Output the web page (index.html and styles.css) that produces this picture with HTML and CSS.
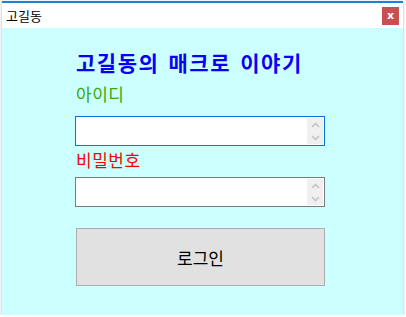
FILE: index.html
```html
<!DOCTYPE html>
<html>
<head>
  <title>고길동</title>
  <link rel="stylesheet" href="styles.css">
</head>
<body>
  <div class="window">
    <div class="titlebar">
      <span class="title">고길동</span>
      <span class="close">x</span>
    </div>
    <div class="content">
      <h1>고길동의 매크로 이야기</h1>
      <label class="label-id" for="userId">아이디</label>
      <div class="field focused">
        <input type="text" id="userId">
        <span class="spin">
          <svg width="9" height="6" viewBox="0 0 9 6"><path d="M1 5 L4.5 1.5 L8 5" fill="none" stroke="#c4c4c4" stroke-width="1.6"/></svg>
          <svg width="9" height="6" viewBox="0 0 9 6"><path d="M1 1 L4.5 4.5 L8 1" fill="none" stroke="#c4c4c4" stroke-width="1.6"/></svg>
        </span>
      </div>
      <label class="label-pw" for="userPw">비밀번호</label>
      <div class="field">
        <input type="password" id="userPw">
        <span class="spin">
          <svg width="9" height="6" viewBox="0 0 9 6"><path d="M1 5 L4.5 1.5 L8 5" fill="none" stroke="#c4c4c4" stroke-width="1.6"/></svg>
          <svg width="9" height="6" viewBox="0 0 9 6"><path d="M1 1 L4.5 4.5 L8 1" fill="none" stroke="#c4c4c4" stroke-width="1.6"/></svg>
        </span>
      </div>
      <button type="button" class="login">로그인</button>
    </div>
  </div>
</body>
</html>
```

FILE: styles.css
```css
body {
  margin: 0;
  background-color: #fff;
  font-family: "Noto Sans CJK KR", "Noto Sans", sans-serif;
}

.window {
  margin: 1px 0 0 2px;
  width: 401px;
  height: 312px;
  border-top: 2px solid #1883d7;
  box-shadow: 0 1px 3px rgba(0, 0, 0, 0.3);
  display: flex;
  flex-direction: column;
}

.titlebar {
  height: 25px;
  display: flex;
  align-items: center;
  justify-content: space-between;
  padding: 0 4px 0 4px;
  background-color: #fff;
}

.title {
  font-size: 13px;
  color: #000;
}

.close {
  width: 17px;
  height: 18px;
  background-color: #c75050;
  color: #fff;
  font-size: 11px;
  font-weight: bold;
  font-family: "DejaVu Sans", sans-serif;
  display: flex;
  align-items: center;
  justify-content: center;
  line-height: 1;
}

.content {
  flex: 1;
  background-color: #ccffff;
  padding: 0 0 0 73px;
  display: flex;
  flex-direction: column;
  align-items: flex-start;
}

.content h1 {
  margin: 20px 0 0 1px;
  font-size: 21px;
  line-height: 28px;
  font-weight: bold;
  letter-spacing: 1.5px;
  word-spacing: 3px;
  color: #0a00f5;
}

.content label {
  font-size: 17px;
  line-height: 24px;
  letter-spacing: 0.5px;
  margin-left: 1px;
}

.label-id {
  margin-top: 6px;
  color: #33aa00;
}

.label-pw {
  margin-top: 2px;
  color: #ff0000;
}

.field {
  width: 250px;
  height: 30px;
  box-sizing: border-box;
  border: 1px solid #7a7a7a;
  background-color: #fff;
  display: flex;
  align-items: stretch;
  padding: 1px;
}

.field.focused {
  border-color: #0078d7;
  margin-top: 10px;
}

.label-pw + .field {
  margin-top: 5px;
}

.field input {
  flex: 1;
  border: none;
  outline: none;
  min-width: 0;
  padding: 0 4px;
  background: transparent;
}

.spin {
  width: 16px;
  background-color: #f0f0f0;
  display: flex;
  flex-direction: column;
  align-items: center;
  justify-content: center;
  gap: 7px;
}

.login {
  margin: 21px 0 0 1px;
  width: 249px;
  height: 58px;
  background-color: #e1e1e1;
  border: 1px solid #adadad;
  font-family: "Noto Sans CJK KR", "Noto Sans", sans-serif;
  font-size: 17px;
  color: #000;
}
```
